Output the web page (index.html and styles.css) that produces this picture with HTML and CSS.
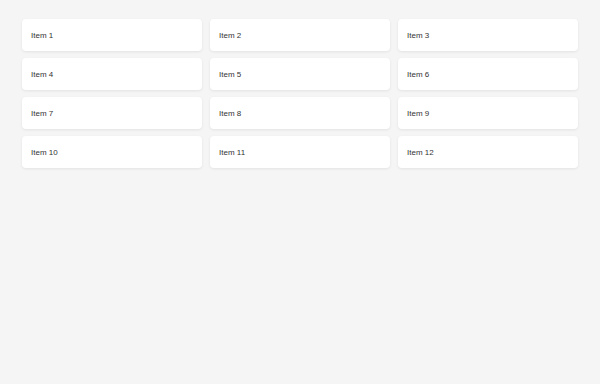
FILE: index.html
```html
<!DOCTYPE html>
<html>
<head>
<meta charset="utf-8">
<link rel="stylesheet" href="styles.css">
</head>
<body>
<div class="grid">
  <div class="card">Item 1</div>
  <div class="card">Item 2</div>
  <div class="card">Item 3</div>
  <div class="card">Item 4</div>
  <div class="card">Item 5</div>
  <div class="card">Item 6</div>
  <div class="card">Item 7</div>
  <div class="card">Item 8</div>
  <div class="card">Item 9</div>
  <div class="card">Item 10</div>
  <div class="card">Item 11</div>
  <div class="card">Item 12</div>
</div>
</body>
</html>
```
FILE: styles.css
```css
html, body {
  margin: 0;
  padding: 0;
  background: #f5f5f5;
  height: 100%;
}
body {
  font-family: "Liberation Sans", Arial, sans-serif;
}
.grid {
  display: grid;
  grid-template-columns: repeat(3, 1fr);
  gap: 7px 8px;
  padding: 19px 22px;
}
.card {
  background: #fff;
  border-radius: 4px;
  box-shadow: 0 1px 3px rgba(0,0,0,0.08);
  height: 32px;
  box-sizing: border-box;
  padding: 0 9px;
  display: flex;
  align-items: center;
  font-size: 8px;
  color: #333;
}
```
